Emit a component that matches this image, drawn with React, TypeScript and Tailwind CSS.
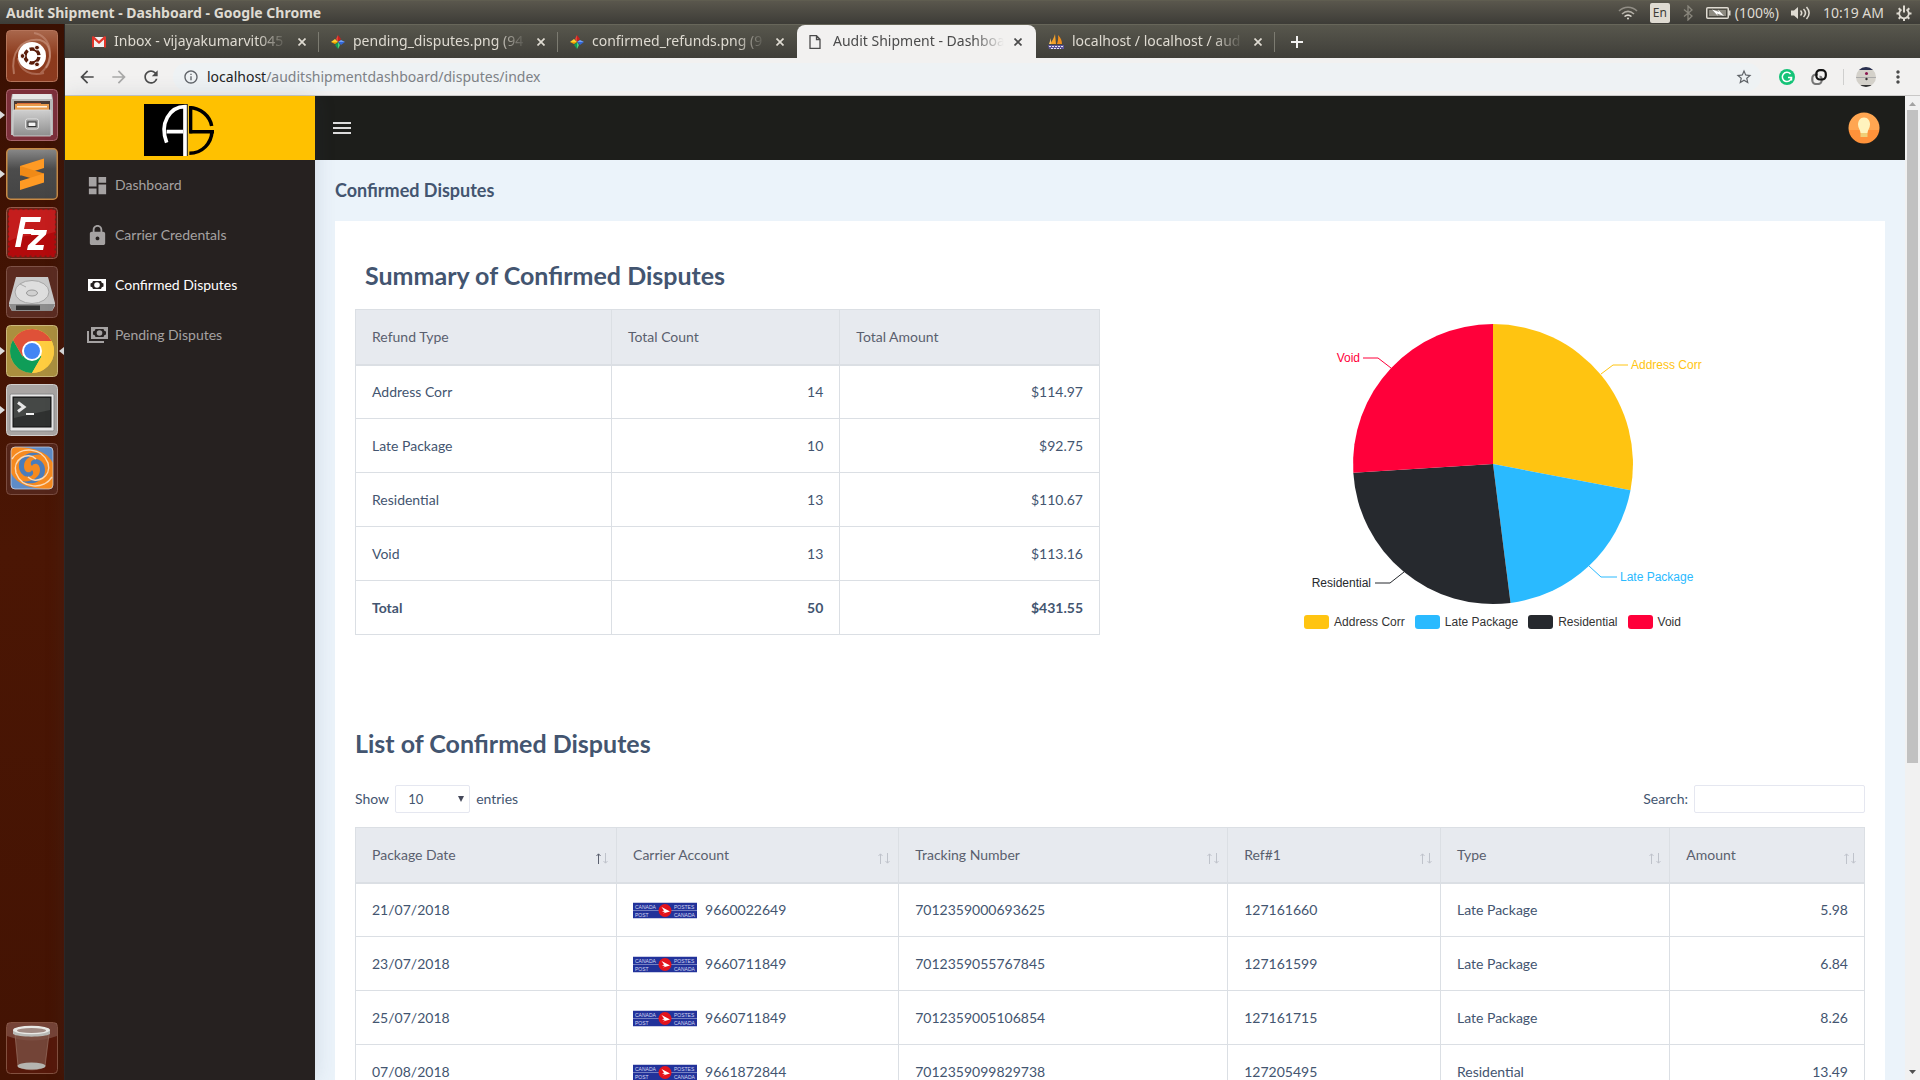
import React from "react";
import {
  MdArrowBack,
  MdArrowForward,
  MdDashboard,
  MdInfoOutline,
  MdLock,
  MdMoreVert,
  MdRefresh,
  MdStarBorder,
} from "react-icons/md";

/* ---------- Desktop launcher ---------- */

function UbuntuIcon() {
  return (
    <svg viewBox="0 0 52 52" className="size-full">
      <defs>
        <linearGradient id="ub" x1="0" y1="0" x2="0" y2="1">
          <stop offset="0" stopColor="#a9674c" />
          <stop offset="0.5" stopColor="#8c3a1c" />
          <stop offset="1" stopColor="#8b3a1f" />
        </linearGradient>
      </defs>
      <rect x="0.5" y="0.5" width="51" height="51" rx="4" fill="url(#ub)" stroke="#b5745a" />
      <path d="M8 44C4 22 16 8 34 10C46 13 46 30 40 38" fill="none" stroke="#d9ab98" strokeOpacity="0.5" strokeWidth="2" />
      <path d="M28 3C46 6 50 30 34 44M12 28C14 42 26 46 38 43" fill="none" stroke="#d9ab98" strokeOpacity="0.4" strokeWidth="2" />
      <circle cx="26" cy="26" r="14" fill="#fff" />
      <circle cx="26" cy="26" r="7" fill="none" stroke="#5a1c0a" strokeWidth="3.4" strokeDasharray="12.4 2.26" strokeDashoffset="-1.1" />
      <circle cx="16.5" cy="26" r="2.4" fill="#5a1c0a" stroke="#fff" />
      <circle cx="31" cy="17.6" r="2.4" fill="#5a1c0a" stroke="#fff" />
      <circle cx="31" cy="34.4" r="2.4" fill="#5a1c0a" stroke="#fff" />
    </svg>
  );
}

function FilesIcon() {
  return (
    <svg viewBox="0 0 52 52" className="size-full">
      <defs>
        <linearGradient id="cab" x1="0" y1="0" x2="0" y2="1">
          <stop offset="0" stopColor="#cfcfcf" />
          <stop offset="1" stopColor="#8f8f8f" />
        </linearGradient>
      </defs>
      <rect x="0.5" y="0.5" width="51" height="51" rx="4" fill="#7c2f3a" stroke="#a8646c" />
      <path d="M6 5h40l1 6v35H5V11z" fill="#b9b9b9" />
      <path d="M7 5h38l1 5H6z" fill="#e6e6e6" />
      <rect x="8" y="12" width="36" height="10" fill="#4a3a34" />
      <path d="M9 15h34v7H9z" fill="#e99c4c" />
      <path d="M11 17h30v1.500H11z" fill="#fff3e2" />
      <path d="M11 14h24v1H11z" fill="#d96a37" />
      <rect x="7" y="21" width="38" height="26" rx="1" fill="url(#cab)" stroke="#dadada" strokeWidth="0.8" />
      <rect x="19.500" y="30" width="13" height="10" rx="2" fill="#9b9b9b" stroke="#e2e2e2" />
      <rect x="22" y="33" width="8" height="4.500" fill="#f4f4f4" stroke="#333" />
    </svg>
  );
}

function SublimeIcon() {
  return (
    <svg viewBox="0 0 52 52" className="size-full">
      <defs>
        <linearGradient id="sb" x1="0" y1="0" x2="0" y2="1">
          <stop offset="0" stopColor="#8a8a8a" />
          <stop offset="0.4" stopColor="#4c4c4c" />
          <stop offset="1" stopColor="#444" />
        </linearGradient>
      </defs>
      <rect x="0.75" y="0.75" width="50.5" height="50.5" rx="4" fill="url(#sb)" stroke="#c78a45" strokeWidth="1.500" />
      <path d="M14 18L38 10.500V20L14 27.500z" fill="#ff9a24" />
      <path d="M14 18L38 25.500V34L14 27z" fill="#f08a17" />
      <path d="M14 33L38 25.500V34.500L14 42z" fill="#ff9a24" />
    </svg>
  );
}

function FileZillaIcon() {
  return (
    <svg viewBox="0 0 52 52" className="size-full">
      <rect x="0.5" y="0.5" width="51" height="51" rx="4" fill="#6a2418" stroke="#96594a" />
      <rect x="3.500" y="3.500" width="45" height="45" fill="#b30a0c" stroke="#b30a0c" strokeWidth="3" strokeDasharray="3 2" />
      <path d="M3 3h46v22C34 30 18 26 3 34z" fill="#cf2a2a" fillOpacity="0.6" />
      <path d="M15 10H35L34 15H19.500L18 22H28L27 27H17L14.500 40H9z" fill="#fff" />
      <path d="M26 23H41L40 27.500L29 38H38L37 43H21L22 38.500L33 28H25z" fill="#fff" />
    </svg>
  );
}

function DiskIcon() {
  return (
    <svg viewBox="0 0 52 52" className="size-full">
      <rect x="0.5" y="0.5" width="51" height="51" rx="4" fill="#5b2b20" stroke="#7d5146" />
      <path d="M10 11H42L49 37V40L46 45H6L3 40V37z" fill="#c9c9c9" />
      <path d="M3 38H49L46 45H6z" fill="#8d8d8d" />
      <path d="M10 39.500H34V44H10z" fill="#333" />
      <ellipse cx="26" cy="26" rx="17" ry="11.500" fill="#dedede" stroke="#a6a6a6" />
      <ellipse cx="26" cy="27" rx="5.500" ry="3" fill="#d0d0d0" stroke="#999" />
      <path d="M14 18L20 21" stroke="#aaa" />
    </svg>
  );
}

function ChromeIcon() {
  return (
    <svg viewBox="0 0 52 52" className="size-full">
      <rect x="0.5" y="0.5" width="51" height="51" rx="4" fill="#ab8f3e" stroke="#cbb77c" />
      <circle cx="26" cy="26" r="22" fill="#ffcd40" />
      <path d="M26 26L16.500 31.500L7 15A22 22 0 0 0 26 48L35.500 31.500z" fill="#0f9d58" />
      <path d="M26 16H45.600A22 22 0 0 0 7 15L16.500 31.500z" fill="#db4437" fillOpacity="0.9" />
      <path d="M26 16H45.600A22 22 0 0 1 26 48L35.500 31.500z" fill="#ffcd40" />
      <circle cx="26" cy="26" r="10" fill="#fff" />
      <circle cx="26" cy="26" r="8" fill="#4285f4" />
    </svg>
  );
}

function TerminalIcon() {
  return (
    <svg viewBox="0 0 52 52" className="size-full">
      <rect x="0.5" y="0.5" width="51" height="51" rx="4" fill="#a9a5a3" stroke="#d2cfcd" />
      <rect x="4" y="10" width="44" height="37" rx="1.500" fill="#e8e8e8" stroke="#8a8a8a" />
      <rect x="7" y="13" width="38" height="30" fill="#2f3130" stroke="#111" />
      <path d="M8 14H44V26L8 34z" fill="#454846" />
      <path d="M12 18.500L18 23L12 27.500" fill="none" stroke="#e6e6e6" strokeWidth="3" />
      <path d="M20 30H28" stroke="#f2f2f2" strokeWidth="2" />
    </svg>
  );
}

function SwirlIcon() {
  return (
    <svg viewBox="0 0 52 52" className="size-full">
      <rect x="0.5" y="0.5" width="51" height="51" rx="4" fill="#54251a" stroke="#7a4c40" />
      <rect x="5" y="4" width="42" height="42" rx="4" fill="#f68a1f" />
      <path d="M14 4H43C46 4 47 6 47 8V20C41 8 27 5 14 4z" fill="#5f8cc6" />
      <path d="M38 46H9C6 46 5 44 5 42V30C11 42 25 45 38 46z" fill="#5f8cc6" />
      <path d="M26 23C21 17 33 12 38 22C43 35 29 45 15 38C24 40 34 35 34 27C34 20 28 19 26 23z" fill="#4a7cbb" />
      <path d="M26 27C31 33 19 38 14 28C9 15 23 5 37 12C28 10 18 15 18 23C18 30 24 31 26 27z" fill="#4a7cbb" />
      <path d="M6 16C14 3 36 4 42 20C46 34 30 42 22 34M46 34C38 47 16 46 10 30C6 16 22 8 30 16" fill="none" stroke="#fcd9b3" strokeWidth="1.500" />
      <rect x="5" y="4" width="42" height="42" rx="4" fill="none" stroke="#cdd9ea" strokeOpacity="0.7" />
    </svg>
  );
}

function TrashIcon() {
  return (
    <svg viewBox="0 0 52 52" className="size-full">
      <rect x="0.5" y="0.5" width="51" height="51" rx="4" fill="#56180a" stroke="#82503f" />
      <path d="M1 1H51V14C34 20 18 20 1 14z" fill="#8a6155" fillOpacity="0.6" />
      <path d="M9 12L12 44C18 49 34 49 39 44L43 12z" fill="#7d5347" fillOpacity="0.75" stroke="#93695c" strokeWidth="0.8" />
      <ellipse cx="25.500" cy="44" rx="14" ry="3.600" fill="#b5b5b0" />
      <path d="M7 8V12C12 15.500 39 15.500 44 12V8z" fill="#b9bab6" />
      <ellipse cx="25.500" cy="8" rx="18.500" ry="4.200" fill="#e9e9e6" />
      <ellipse cx="25.500" cy="8.500" rx="14.500" ry="2.600" fill="#a08a83" />
    </svg>
  );
}

const launcher = [
  { name: "Search your computer", Icon: UbuntuIcon, running: false, focused: false },
  { name: "Files", Icon: FilesIcon, running: true, focused: false },
  { name: "Sublime Text", Icon: SublimeIcon, running: true, focused: false },
  { name: "FileZilla", Icon: FileZillaIcon, running: false, focused: false },
  { name: "Disk", Icon: DiskIcon, running: false, focused: false },
  { name: "Chrome", Icon: ChromeIcon, running: true, focused: true },
  { name: "Terminal", Icon: TerminalIcon, running: true, focused: false },
  { name: "Utility", Icon: SwirlIcon, running: false, focused: false },
];

function Launcher() {
  return (
    <nav
      aria-label="Launcher"
      className="flex w-[65px] shrink-0 flex-col justify-between border-r border-[#2b2423] bg-linear-to-b from-[#3a1002] via-[#4b1604] to-[#431303] pt-1.5 pb-1.5"
    >
      <ul className="flex flex-col gap-[7px]">
        {launcher.map(({ name, Icon, running, focused }) => (
          <li key={name} className="flex items-center">
            <span className="w-1.5">
              {running && (
                <svg viewBox="0 0 5 8" className="h-2 w-[5px]">
                  <path d="M0 0L5 4L0 8z" fill="#dcdcdc" />
                </svg>
              )}
            </span>
            <button aria-label={name} className="size-[52px]">
              <Icon />
            </button>
            <span className="flex w-1.5 justify-end">
              {focused && (
                <svg viewBox="0 0 5 8" className="h-2 w-[5px]">
                  <path d="M5 0L0 4L5 8z" fill="#dcdcdc" />
                </svg>
              )}
            </span>
          </li>
        ))}
      </ul>
      <button aria-label="Trash" className="ml-1.5 size-[52px]">
        <TrashIcon />
      </button>
    </nav>
  );
}

/* ---------- System menu bar ---------- */

function MenuBar() {
  return (
    <header className="flex h-6 shrink-0 items-center justify-between border-t border-[#5f5d50] bg-linear-to-b from-[#5a574d] to-[#3d3c37] pr-2 pl-1.5 font-['Noto_Sans',sans-serif] text-[#dfdbd2]">
      <h1 className="text-sm font-bold">Audit Shipment - Dashboard - Google Chrome</h1>
      <div className="flex items-center gap-3 text-sm">
        <svg viewBox="0 0 20 14" className="h-3.5 w-5" fill="none" stroke="#dfdbd2" strokeWidth="1.600">
          <path d="M1 5C6 0 14 0 19 5" strokeOpacity="0.45" />
          <path d="M4 8C8 4.500 12 4.500 16 8" strokeOpacity="0.7" />
          <path d="M6.500 10.500C9 8.500 11 8.500 13.500 10.500" />
          <circle cx="10" cy="12.500" r="1" fill="#dfdbd2" stroke="none" />
        </svg>
        <span className="flex h-5 w-5 items-center justify-center rounded-xs bg-[#dfdbd2] text-xs text-[#3d3c37]">En</span>
        <svg viewBox="0 0 12 16" className="h-4 w-3" fill="none" stroke="#8a877d" strokeWidth="1.300">
          <path d="M2 4.500L10 11L6 15V1L10 5L2 11.500" />
        </svg>
        <span className="flex items-center gap-1">
          <svg viewBox="0 0 25 12" className="h-3 w-[25px]">
            <rect x="0.75" y="0.75" width="21.500" height="10.500" rx="1" fill="none" stroke="#dfdbd2" strokeWidth="1.500" />
            <rect x="3" y="3" width="17" height="6" fill="#8d8a80" />
            <path d="M23 3.500h1.500v5H23z" fill="#dfdbd2" />
            <path d="M6 2.500L13 5L12 2.500L18 9L11 6.500L12 9z" fill="#fff" />
          </svg>
          (100%)
        </span>
        <svg viewBox="0 0 20 16" className="h-4 w-5" fill="none" stroke="#dfdbd2" strokeWidth="1.500">
          <path d="M0 5.500H3L7 2V14L3 10.500H0z" fill="#dfdbd2" stroke="none" />
          <path d="M9.500 5.500C11 7 11 9 9.500 10.500M12.500 4C15 6.500 15 9.500 12.500 12M15.500 2C19 6 19 10 15.500 14" />
        </svg>
        <span>10:19 AM</span>
        <svg viewBox="0 0 16 16" className="size-4" fill="none" stroke="#dfdbd2">
          <path d="M5.500 4.400A4.800 4.800 0 1 0 10.500 4.400" strokeWidth="1.800" />
          <path d="M8 0.500V7.500" strokeWidth="2" />
          <path d="M0.500 8.500H3M13 8.500H15.500M2.700 13.800L4.500 12M13.300 13.800L11.500 12M8 13.500V16M2.700 3.200L4.500 5M13.300 3.200L11.500 5" strokeWidth="2" />
        </svg>
      </div>
    </header>
  );
}

/* ---------- Browser chrome ---------- */

function GmailIcon() {
  return (
    <svg viewBox="0 0 14 12" className="h-3 w-3.5">
      <path d="M1 1H13V11H1z" fill="#f1f1f1" />
      <path d="M0 1.500C0 0 1.500 0 2 0.500L7 5L12 0.500C12.500 0 14 0 14 1.500V11.500H12V3.500L7 8L2 3.500V11.500H0z" fill="#e1362b" />
    </svg>
  );
}

function PhotosIcon() {
  return (
    <svg viewBox="0 0 14 14" className="size-3.5">
      <path d="M7 0L10 4L7 7z" fill="#c5221f" />
      <path d="M7 0V7L5 4z" fill="#ea4335" />
      <path d="M14 7L10 10L7 7z" fill="#3367d6" />
      <path d="M14 7H7L10 5z" fill="#6ea0ff" />
      <path d="M7 14L4 10L7 7z" fill="#0f9d58" />
      <path d="M7 14V7L9 10z" fill="#4cd07d" />
      <path d="M0 7L4 4L7 7z" fill="#ffcf2e" />
      <path d="M0 7H7L4 9z" fill="#f2a600" />
    </svg>
  );
}

function PageIcon() {
  return (
    <svg viewBox="0 0 12 14" className="mr-1 h-3.5 w-3" fill="none" stroke="#4b4b4b" strokeWidth="1.300">
      <path d="M1 0.700H7.500L11 4.200V13.300H1zM7.500 0.700V4.500H11" />
    </svg>
  );
}

function PmaIcon() {
  return (
    <svg viewBox="0 0 16 16" className="size-4">
      <path d="M7 0L8 10H2C4 7 6 4 7 0z" fill="#f3a12b" />
      <path d="M10 1C13 4 14 7 14 10H9C10 7 10.500 4 10 1z" fill="#f08c1b" />
      <path d="M3 4V10H1z" fill="#f6c266" />
      <path d="M0 11H16V15H1z" fill="#5d5698" />
      <path d="M1 12.500H15M3 14.500H13" stroke="#e7e4f4" strokeDasharray="2 1" />
    </svg>
  );
}

const tabs = [
  { title: "Inbox - vijayakumarvit045", Icon: GmailIcon, active: false, divider: true },
  { title: "pending_disputes.png (94", Icon: PhotosIcon, active: false, divider: true },
  { title: "confirmed_refunds.png (9", Icon: PhotosIcon, active: false, divider: false },
  { title: "Audit Shipment - Dashboa", Icon: PageIcon, active: true, divider: false },
  { title: "localhost / localhost / aud", Icon: PmaIcon, active: false, divider: true },
];

function TabStrip() {
  return (
    <div className="flex h-[34px] shrink-0 items-stretch border-t border-[#67665a] bg-linear-to-b from-[#58574d] to-[#3f3e39] pl-[15px] font-['Noto_Sans',sans-serif] text-sm text-[#dfdbd2]">
      {tabs.map(({ title, Icon, active, divider }) => (
        <div
          key={title}
          className={
            active
              ? "flex w-[239px] items-center gap-2 rounded-t-lg bg-[#f2f1f0] px-3 text-[#4b4b4b]"
              : "flex w-[239px] items-center gap-2 pl-3"
          }
        >
          <Icon />
          <span className="min-w-0 flex-1 overflow-hidden pb-0.5 whitespace-nowrap [mask-image:linear-gradient(to_right,black_82%,transparent)]">
            {title}
          </span>
          <button aria-label="Close tab" className="px-0.5">
            <svg viewBox="0 0 8 8" className="size-2" stroke="currentColor" strokeWidth="1.700">
              <path d="M0.500 0.500L7.500 7.500M7.500 0.500L0.500 7.500" />
            </svg>
          </button>
          {!active && <span className={divider ? "ml-0.5 h-5 w-px bg-[#7c7b71]" : "ml-0.5 h-5 w-px"} />}
        </div>
      ))}
      <button aria-label="New tab" className="px-4">
        <svg viewBox="0 0 12 12" className="size-3" stroke="#f2f1f0" strokeWidth="2">
          <path d="M6 0V12M0 6H12" />
        </svg>
      </button>
    </div>
  );
}

function Toolbar() {
  return (
    <div className="flex h-[38px] shrink-0 items-center border-b border-[#c9c8c7] bg-[#f2f1f0] pr-3 pl-3 text-[#4b4b4b]">
      <button aria-label="Back" className="w-8">
        <MdArrowBack className="size-5" />
      </button>
      <button aria-label="Forward" className="w-8 text-[#a9a9a8]">
        <MdArrowForward className="size-5" />
      </button>
      <button aria-label="Reload" className="w-8">
        <MdRefresh className="size-5" />
      </button>
      <div className="flex h-7 flex-1 items-center gap-2 rounded-full bg-[#eef2f4] pr-2 pl-2.5">
        <MdInfoOutline className="size-4 text-[#5f6368]" />
        <p className="flex-1 font-['Noto_Sans',sans-serif] text-sm text-[#7d8186]">
          <span className="text-[#222]">localhost</span>/auditshipmentdashboard/disputes/index
        </p>
        <button aria-label="Bookmark">
          <MdStarBorder className="size-[18px] text-[#5f6368]" />
        </button>
      </div>
      <div className="ml-[18px] flex items-center">
        <svg viewBox="0 0 16 16" className="size-4">
          <circle cx="8" cy="8" r="8" fill="#15c377" />
          <path d="M11.500 5A4.600 4.600 0 1 0 12.500 8.500H9" fill="none" stroke="#fff" strokeWidth="1.500" />
          <path d="M12.500 8.500V11.500" stroke="#fff" strokeWidth="1.500" />
        </svg>
        <svg viewBox="0 0 16 16" className="ml-4 size-4" fill="none" strokeWidth="2.200">
          <path d="M7 5.500H5A3.700 3.700 0 0 0 1.300 9.200V11.300A3.700 3.700 0 0 0 5 15H7A3.700 3.700 0 0 0 10.700 11.300V9.500A2.500 2.500 0 0 0 8.500 7.500" stroke="#777" />
          <path d="M9 1.200H11A3.800 3.800 0 0 1 14.800 5V6.800A3.700 3.700 0 0 1 11 10.500H9A3.700 3.700 0 0 1 5.300 6.800V5A3.700 3.700 0 0 1 9 1.200z" stroke="#111" />
        </svg>
        <span className="mx-3 ml-4 h-4 w-px bg-[#cfcfce]" />
        <svg viewBox="0 0 20 20" className="size-5">
          <clipPath id="av">
            <circle cx="10" cy="10" r="10" />
          </clipPath>
          <g clipPath="url(#av)">
            <rect width="20" height="20" fill="#d4d1ca" />
            <rect width="20" height="3" fill="#2a3050" />
            <rect y="18" width="20" height="2" fill="#333" />
            <path d="M0 10.500H20" stroke="#aaa" />
            <circle cx="10.500" cy="6.500" r="1.500" fill="#8a1850" />
            <circle cx="10.500" cy="12" r="1.200" fill="#333" />
          </g>
        </svg>
        <button aria-label="Menu" className="ml-3">
          <MdMoreVert className="size-5" />
        </button>
      </div>
    </div>
  );
}

/* ---------- Dashboard ---------- */

function Logo() {
  return (
    <svg viewBox="240 42 213 156" className="h-[52px] w-[71px]" fill="none">
      <rect x="240" y="42" width="132" height="156" fill="#000" />
      <path d="M363 198V50C318 50 285 100 308 158M308 125H357" stroke="#fff" strokeWidth="11" />
      <path d="M372 42V198" stroke="#e8ca6a" strokeWidth="2" />
      <path d="M380 130V48" stroke="#000" strokeWidth="10" />
      <path d="M376 53C410 53 438 78 443 108M376 125H450M444 125C442 160 415 190 376 190" stroke="#000" strokeWidth="10.500" />
    </svg>
  );
}

function CashIcon() {
  return (
    <svg viewBox="0 0 18 12" className="h-3 w-[18px]">
      <rect width="18" height="12" fill="currentColor" />
      <path d="M5 2H13A3 3 0 0 0 15.500 4.500V7.500A3 3 0 0 0 13 10H5A3 3 0 0 0 2.500 7.500V4.500A3 3 0 0 0 5 2z" fill="#262120" />
      <circle cx="9" cy="6" r="2.800" fill="currentColor" />
    </svg>
  );
}

function CashStackIcon() {
  return (
    <svg viewBox="0 0 21 16" className="h-4 w-[21px]">
      <rect x="4" width="17" height="12" fill="currentColor" />
      <path d="M8.500 2H16.500A3 3 0 0 0 19 4.500V7.500A3 3 0 0 0 16.500 10H8.500A3 3 0 0 0 6 7.500V4.500A3 3 0 0 0 8.500 2z" fill="#262120" />
      <circle cx="12.500" cy="6" r="2.800" fill="currentColor" />
      <path d="M1 4V15H17" fill="none" stroke="currentColor" strokeWidth="2" />
    </svg>
  );
}

const menu = [
  { label: "Dashboard", icon: <MdDashboard className="size-[23px]" />, active: false },
  { label: "Carrier Credentals", icon: <MdLock className="size-[23px]" />, active: false },
  { label: "Confirmed Disputes", icon: <CashIcon />, active: true },
  { label: "Pending Disputes", icon: <CashStackIcon />, active: false },
];

function Sidebar() {
  return (
    <aside className="relative z-10 flex w-[250px] shrink-0 flex-col bg-[#262120] shadow-[0_0_20px_rgba(60,80,110,0.15)]">
      <a href="#home" aria-label="Audit Shipment" className="flex h-16 items-center justify-center bg-[#ffc100] pr-[21px] pt-1">
        <Logo />
      </a>
      <nav aria-label="Main">
        {menu.map(({ label, icon, active }) => (
          <a
            key={label}
            href={"#" + label.toLowerCase().replace(" ", "-")}
            className={
              active
                ? "flex h-[50px] items-center gap-1.5 pl-5 text-sm text-white"
                : "flex h-[50px] items-center gap-1.5 pl-5 text-sm text-[#a5a2a2]"
            }
          >
            <span className="flex w-6 justify-center">{icon}</span>
            {label}
          </a>
        ))}
      </nav>
    </aside>
  );
}

const summary = [
  { type: "Address Corr", count: 14, amount: "$114.97", color: "#ffc411" },
  { type: "Late Package", count: 10, amount: "$92.75", color: "#2abaff" },
  { type: "Residential", count: 13, amount: "$110.67", color: "#26292e" },
  { type: "Void", count: 13, amount: "$113.16", color: "#ff003a" },
];

function SummaryTable() {
  return (
    <table className="w-full table-fixed border-collapse border border-[#dbdfe4] text-sm">
      <thead>
        <tr className="bg-[#e7eaef] text-left text-[#5a5f6e]">
          <th className="h-[55px] w-[34.4%] border border-b-2 border-[#dbdfe4] px-4 font-normal">Refund Type</th>
          <th className="w-[30.7%] border border-b-2 border-[#dbdfe4] px-4 font-normal">Total Count</th>
          <th className="w-[34.9%] border border-b-2 border-[#dbdfe4] px-4 font-normal">Total Amount</th>
        </tr>
      </thead>
      <tbody>
        {summary.map((row) => (
          <tr key={row.type}>
            <td className="h-[54px] border border-[#dbdfe4] px-4">{row.type}</td>
            <td className="border border-[#dbdfe4] px-4 text-right">{row.count}</td>
            <td className="border border-[#dbdfe4] px-4 text-right">{row.amount}</td>
          </tr>
        ))}
        <tr className="font-bold">
          <td className="h-[54px] border border-[#dbdfe4] px-4">Total</td>
          <td className="border border-[#dbdfe4] px-4 text-right">50</td>
          <td className="border border-[#dbdfe4] px-4 text-right">$431.55</td>
        </tr>
      </tbody>
    </table>
  );
}

function PieChart() {
  return (
    <figure className="flex flex-col items-center font-['Liberation_Sans',sans-serif] text-xs">
      <svg viewBox="0 0 440 374" className="h-[374px] w-[440px]" role="img" aria-label="Confirmed disputes by type">
        <path d="M220 223V83A140 140 0 0 1 357.500 249.200z" fill="#ffc411" />
        <path d="M220 223L357.500 249.200A140 140 0 0 1 237.500 361.900z" fill="#2abaff" />
        <path d="M220 223L237.500 361.900A140 140 0 0 1 80.300 231.800z" fill="#26292e" />
        <path d="M220 223L80.300 231.800A140 140 0 0 1 220 83z" fill="#ff003a" />
        <g fill="none">
          <path d="M328 133L340 124H355" stroke="#ffc411" />
          <path d="M316 325L328 336H344" stroke="#2abaff" />
          <path d="M131 331L117 342H102" stroke="#26292e" />
          <path d="M118 127L105 117H90" stroke="#ff003a" />
        </g>
        <text x="358" y="128" fill="#ffc411">Address Corr</text>
        <text x="347" y="340" fill="#2abaff">Late Package</text>
        <text x="98" y="346" fill="#26292e" textAnchor="end">Residential</text>
        <text x="87" y="121" fill="#ff003a" textAnchor="end">Void</text>
      </svg>
      <figcaption className="flex gap-2.5 text-[#333]">
        {summary.map((s) => (
          <span key={s.type} className="flex h-3.5 items-center gap-[5px]">
            <span className="h-3.5 w-[25px] rounded-[3px]" style={{ backgroundColor: s.color }} />
            {s.type}
          </span>
        ))}
      </figcaption>
    </figure>
  );
}

function CanadaPost() {
  return (
    <svg viewBox="0 0 64 17" className="mt-0.5 h-[17px] w-16 font-['Liberation_Sans',sans-serif] text-[5px]" role="img" aria-label="Canada Post">
      <rect width="64" height="17" fill="#c9cde6" />
      <rect y="1" width="64" height="15" fill="#22329a" />
      <path d="M0 8.500H64" stroke="#7680c2" />
      <g fill="#d3d7f0">
        <text x="2" y="6.500">CANADA</text>
        <text x="2" y="14.500">POST</text>
        <text x="41" y="6.500">POSTES</text>
        <text x="41" y="14.500">CANADA</text>
      </g>
      <circle cx="32" cy="8.500" r="6.500" fill="#e3131c" />
      <path d="M28.500 5L37 9.500L30 11.500L32 10L29 9.500L31 8.500z" fill="#fff" />
    </svg>
  );
}

function SortArrows({ ascending }: { ascending: boolean }) {
  return (
    <svg viewBox="0 0 12 11" className="mt-2 h-[11px] w-3" fill="none">
      <path d="M2.500 11V1M0.500 3L2.500 0.800L4.500 3" stroke={ascending ? "#5a5f6e" : "#bfc3cb"} />
      <path d="M9.500 0V10M7.500 8L9.500 10.200L11.500 8" stroke="#bfc3cb" />
    </svg>
  );
}

const columns = [
  { label: "Package Date", width: "w-[17.3%]" },
  { label: "Carrier Account", width: "w-[18.7%]" },
  { label: "Tracking Number", width: "w-[21.8%]" },
  { label: "Ref#1", width: "w-[14.1%]" },
  { label: "Type", width: "w-[15.2%]" },
  { label: "Amount", width: "w-[12.9%]" },
];

const disputes = [
  ["21/07/2018", "9660022649", "7012359000693625", "127161660", "Late Package", "5.98"],
  ["23/07/2018", "9660711849", "7012359055767845", "127161599", "Late Package", "6.84"],
  ["25/07/2018", "9660711849", "7012359005106854", "127161715", "Late Package", "8.26"],
  ["07/08/2018", "9661872844", "7012359099829738", "127205495", "Residential", "13.49"],
];

function DisputeList() {
  return (
    <section className="mt-[92px]">
      <h3 className="text-[25px] leading-8 font-bold">List of Confirmed Disputes</h3>
      <div className="mt-[26px] flex items-center justify-between text-sm">
        <label className="flex items-center gap-1.5">
          Show
          <span className="relative">
            <select className="h-7 w-[75px] appearance-none rounded-xs border border-[#e5e7f0] bg-white pl-3 text-[13px]" defaultValue="10">
              <option>10</option>
              <option>25</option>
              <option>50</option>
            </select>
            <svg viewBox="0 0 6 6" className="pointer-events-none absolute top-[11px] right-1.5 size-1.5">
              <path d="M0 0H6L3 6z" fill="#44485a" />
            </svg>
          </span>
          entries
        </label>
        <label className="flex items-center gap-1.5">
          Search:
          <input type="search" className="h-7 w-[171px] rounded-xs border border-[#e5e7f0] px-2" />
        </label>
      </div>
      <table className="mt-3.5 w-full table-fixed border-collapse text-sm">
        <thead>
          <tr className="bg-[#e7eaef] text-left text-[#5a5f6e]">
            {columns.map((c, i) => (
              <th key={c.label} className={c.width + " h-[55px] border border-b-2 border-[#dbdfe4] pr-2 pl-4 font-normal"}>
                <button className="flex w-full items-center justify-between">
                  {c.label}
                  <SortArrows ascending={i === 0} />
                </button>
              </th>
            ))}
          </tr>
        </thead>
        <tbody>
          {disputes.map((d) => (
            <tr key={d[2]}>
              <td className="h-[54px] border border-[#dbdfe4] px-4">{d[0]}</td>
              <td className="border border-[#dbdfe4] px-4">
                <span className="flex items-center gap-2">
                  <CanadaPost />
                  {d[1]}
                </span>
              </td>
              <td className="border border-[#dbdfe4] px-4">{d[2]}</td>
              <td className="border border-[#dbdfe4] px-4">{d[3]}</td>
              <td className="border border-[#dbdfe4] px-4">{d[4]}</td>
              <td className="border border-[#dbdfe4] px-4 text-right">{d[5]}</td>
            </tr>
          ))}
        </tbody>
      </table>
    </section>
  );
}

function TopBar() {
  return (
    <div className="flex h-16 shrink-0 items-center justify-between bg-[#1d1e1b] pr-[25px] pl-[18px]">
      <button aria-label="Toggle sidebar">
        <svg viewBox="0 0 18 12" className="h-3 w-[18px]">
          <path d="M0 1H18M0 6H18M0 11H18" stroke="#dcdcdc" strokeWidth="2" />
        </svg>
      </button>
      <button aria-label="Account">
        <svg viewBox="0 0 32 32" className="size-8">
          <clipPath id="bulb">
            <circle cx="16" cy="16" r="15.500" />
          </clipPath>
          <g clipPath="url(#bulb)">
            <rect width="32" height="18" fill="#ffa651" />
            <rect y="18" width="32" height="14" fill="#ff923a" />
          </g>
          <path d="M16 5.500C20 5.500 22 9 22 12.500C22 16 19.500 18 19.500 21H12.500C12.500 18 10 16 10 12.500C10 9 12 5.500 16 5.500z" fill="#fff3bd" />
          <path d="M12.500 21H19.500V25H12.500z" fill="#f0cf78" />
        </svg>
      </button>
    </div>
  );
}

function Scrollbar() {
  return (
    <div aria-hidden="true" className="flex w-[15px] shrink-0 flex-col items-center bg-[#f1f1f1] py-1.5">
      <svg viewBox="0 0 7 4" className="h-1 w-[7px]">
        <path d="M0 4L3.500 0L7 4z" fill="#a3a3a3" />
      </svg>
      <div className="mt-1 w-[11px] flex-[17] bg-[#c1c1c1]" />
      <div className="flex-[8]" />
      <svg viewBox="0 0 7 4" className="h-1 w-[7px]">
        <path d="M0 0L3.500 4L7 0z" fill="#505050" />
      </svg>
    </div>
  );
}

export default function App() {
  return (
    <div className="flex h-screen flex-col overflow-hidden">
      <MenuBar />
      <div className="flex min-h-0 flex-1">
        <Launcher />
        <div className="flex min-w-0 flex-1 flex-col">
          <TabStrip />
          <Toolbar />
          <div className="flex min-h-0 flex-1 font-['Lato',sans-serif] text-[#435570]">
            <Sidebar />
            <div className="flex min-w-0 flex-1 flex-col overflow-hidden bg-[#ebf3fa]">
              <TopBar />
              <main className="min-h-0 flex-1 overflow-hidden px-5">
                <h2 className="flex h-[61px] items-center pb-0.5 text-lg font-bold">Confirmed Disputes</h2>
                <div className="bg-white p-5">
                  <div className="grid grid-cols-2 gap-5">
                    <section>
                      <h3 className="my-[18px] pl-2.5 text-[25px] leading-8 font-bold">Summary of Confirmed Disputes</h3>
                      <SummaryTable />
                    </section>
                    <PieChart />
                  </div>
                  <DisputeList />
                </div>
              </main>
            </div>
            <Scrollbar />
          </div>
        </div>
      </div>
    </div>
  );
}
